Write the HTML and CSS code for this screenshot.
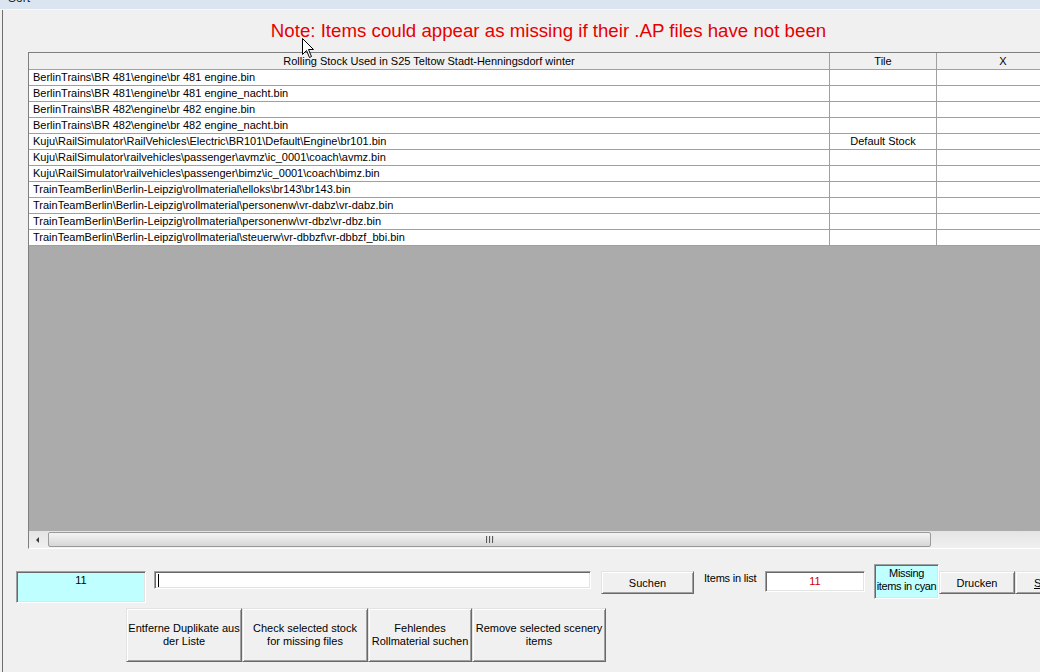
FILE: index.html
```html
<!DOCTYPE html>
<html>
<head>
<meta charset="utf-8">
<link rel="stylesheet" href="styles.css">
</head>
<body>
<div class="titlebar"><span class="title-text">Sort</span></div>
<div class="window">
  <div class="note">Note: Items could appear as missing if their .AP files have not been</div>
  <div class="grid-frame">
    <div class="grid">
      <div class="cell hd">Rolling Stock Used in S25 Teltow Stadt-Henningsdorf winter</div>
      <div class="cell hd">Tile</div>
      <div class="cell hd">X</div>

      <div class="cell">BerlinTrains\BR 481\engine\br 481 engine.bin</div><div class="cell mid"></div><div class="cell"></div>
      <div class="cell">BerlinTrains\BR 481\engine\br 481 engine_nacht.bin</div><div class="cell mid"></div><div class="cell"></div>
      <div class="cell">BerlinTrains\BR 482\engine\br 482 engine.bin</div><div class="cell mid"></div><div class="cell"></div>
      <div class="cell">BerlinTrains\BR 482\engine\br 482 engine_nacht.bin</div><div class="cell mid"></div><div class="cell"></div>
      <div class="cell">Kuju\RailSimulator\RailVehicles\Electric\BR101\Default\Engine\br101.bin</div><div class="cell mid">Default Stock</div><div class="cell"></div>
      <div class="cell">Kuju\RailSimulator\railvehicles\passenger\avmz\ic_0001\coach\avmz.bin</div><div class="cell mid"></div><div class="cell"></div>
      <div class="cell">Kuju\RailSimulator\railvehicles\passenger\bimz\ic_0001\coach\bimz.bin</div><div class="cell mid"></div><div class="cell"></div>
      <div class="cell">TrainTeamBerlin\Berlin-Leipzig\rollmaterial\elloks\br143\br143.bin</div><div class="cell mid"></div><div class="cell"></div>
      <div class="cell">TrainTeamBerlin\Berlin-Leipzig\rollmaterial\personenw\vr-dabz\vr-dabz.bin</div><div class="cell mid"></div><div class="cell"></div>
      <div class="cell">TrainTeamBerlin\Berlin-Leipzig\rollmaterial\personenw\vr-dbz\vr-dbz.bin</div><div class="cell mid"></div><div class="cell"></div>
      <div class="cell">TrainTeamBerlin\Berlin-Leipzig\rollmaterial\steuerw\vr-dbbzf\vr-dbbzf_bbi.bin</div><div class="cell mid"></div><div class="cell"></div>
    </div>
    <div class="empty"></div>
    <div class="hscroll">
      <div class="arrow"><span class="tri"></span></div>
      <div class="thumb"><span class="grip"></span><span class="grip"></span><span class="grip"></span></div>
    </div>
  </div>

  <div class="controls">
    <div class="cyan-count sunken">11</div>
    <div class="search sunken"><span class="caret"></span></div>
    <div class="btn btn-suchen">Suchen</div>
    <div class="label">Items in list</div>
    <div class="count-input sunken">11</div>
    <div class="missing sunken">Missing<br>items in cyan</div>
    <div class="btn btn-drucken">Drucken</div>
    <div class="btn btn-s"><u>S</u></div>
  </div>

  <div class="actions">
    <div class="btn big w1">Entferne Duplikate aus<br>der Liste</div>
    <div class="btn big w2">Check selected stock<br>for missing files</div>
    <div class="btn big w3">Fehlendes<br>Rollmaterial suchen</div>
    <div class="btn big w4">Remove selected scenery<br>items</div>
  </div>
</div>

<svg class="cursor" width="13" height="21" viewBox="0 0 13 21">
  <path d="M0.5,0.5 L0.5,16.5 L4.5,12.5 L7.5,19.5 L9.5,18.5 L6.5,11.5 L11.5,11.5 Z" fill="#fff" stroke="#000" stroke-width="1"/>
</svg>
</body>
</html>
```

FILE: styles.css
```css
html, body {
  margin: 0;
  padding: 0;
}

body {
  width: 1040px;
  height: 672px;
  overflow: hidden;
  position: relative;
  background: #f0f0f0;
  font-family: "Liberation Sans", Arial, sans-serif;
  font-size: 11px;
  color: #000;
}

.titlebar {
  height: 9px;
  background: #dbe4f1;
  border-bottom: 1px solid #f6f8fb;
  overflow: hidden;
  padding-left: 8px;
}

.title-text {
  display: block;
  font-size: 12px;
  line-height: 12px;
  margin-top: -8px;
  color: #1e1e1e;
}

.window {
  margin-left: 2px;
  border-left: 1px solid #6e6e6e;
  width: 1091px;
  height: 662px;
}

.note {
  box-sizing: border-box;
  height: 42px;
  padding-top: 10px;
  text-align: center;
  color: #e60000;
  font-size: 18.7px;
  line-height: 21px;
}

.grid-frame {
  margin-left: 25px;
  border-top: 1px solid #7f7f7f;
  border-left: 1px solid #7f7f7f;
  border-bottom: 1px solid #ffffff;
}

.grid {
  display: grid;
  grid-template-columns: 801px 107px 133px;
  background: #fff;
}

.cell {
  height: 15px;
  line-height: 15px;
  padding-left: 4px;
  border-right: 1px solid #a0a0a0;
  border-bottom: 1px solid #a0a0a0;
  white-space: nowrap;
  overflow: hidden;
}

.cell.mid {
  padding-left: 0;
  text-align: center;
}

.cell.hd {
  height: 16px;
  line-height: 16px;
  padding-left: 0;
  text-align: center;
  background: #f0f0f0;
}

.empty {
  height: 285px;
  background: #ababab;
}

.hscroll {
  height: 17px;
  display: flex;
  align-items: center;
  background: linear-gradient(#e4e4e4, #f0f0f0);
}

.arrow {
  width: 17px;
  height: 17px;
  display: flex;
  align-items: center;
  justify-content: center;
}

.tri {
  width: 0;
  height: 0;
  border-top: 3px solid transparent;
  border-bottom: 3px solid transparent;
  border-right: 3px solid #3c3c3c;
}

.thumb {
  box-sizing: border-box;
  margin-left: 2px;
  width: 883px;
  height: 15px;
  border: 1px solid #9a9a9a;
  border-radius: 2px;
  background: linear-gradient(#f4f4f4, #e6e6e6 50%, #d6d6d6);
  display: flex;
  align-items: center;
  justify-content: center;
  gap: 1px;
}

.grip {
  width: 1px;
  height: 7px;
  background: #5a5a5a;
  box-shadow: 1px 0 #d8d8d8;
  margin-right: 1px;
}

.sunken {
  box-sizing: border-box;
  border: 1px solid;
  border-color: #a0a0a0 #ffffff #ffffff #a0a0a0;
  box-shadow: inset 1px 1px #696969, inset -1px -1px #e3e3e3;
}

.btn {
  box-sizing: border-box;
  border: 1px solid;
  border-color: #e3e3e3 #696969 #696969 #e3e3e3;
  box-shadow: inset 1px 1px #ffffff, inset -1px -1px #a0a0a0;
  background: #f0f0f0;
  display: flex;
  align-items: center;
  justify-content: center;
  text-align: center;
}

.controls {
  display: flex;
  align-items: flex-start;
  margin-top: 15px;
  padding-left: 13px;
}

.cyan-count {
  width: 130px;
  height: 32px;
  margin-top: 7px;
  background: #c0ffff;
  text-align: center;
  padding-top: 2px;
  line-height: 13px;
}

.search {
  position: relative;
  margin-left: 8px;
  margin-top: 7px;
  width: 437px;
  height: 18px;
  background: #fff;
}

.caret {
  position: absolute;
  left: 3px;
  top: 2px;
  width: 1px;
  height: 13px;
  background: #000;
}

.btn-suchen {
  margin-left: 10px;
  margin-top: 7px;
  width: 93px;
  height: 23px;
}

.label {
  margin-left: 10px;
  margin-top: 8px;
  width: 61px;
  line-height: 13px;
  letter-spacing: -0.2px;
}

.count-input {
  margin-top: 7px;
  width: 100px;
  height: 21px;
  background: #fff;
  color: #d00000;
  text-align: center;
  line-height: 19px;
}

.missing {
  margin-left: 9px;
  width: 65px;
  height: 35px;
  background: #c0ffff;
  text-align: center;
  line-height: 13px;
  padding-top: 2px;
  white-space: nowrap;
  letter-spacing: -0.35px;
}

.btn-drucken {
  margin-top: 7px;
  width: 76px;
  height: 23px;
}

.btn-s {
  margin-top: 7px;
  width: 60px;
  height: 23px;
  justify-content: flex-start;
  padding-left: 18px;
}

.actions {
  display: flex;
  margin-top: 5px;
  margin-left: 123px;
}

.big {
  height: 54px;
  line-height: 13px;
}

.w1 { width: 116px; }
.w2 { width: 126px; }
.w3 { width: 104px; }
.w4 { width: 134px; }

.cursor {
  position: absolute;
  left: 302px;
  top: 38px;
}
```
